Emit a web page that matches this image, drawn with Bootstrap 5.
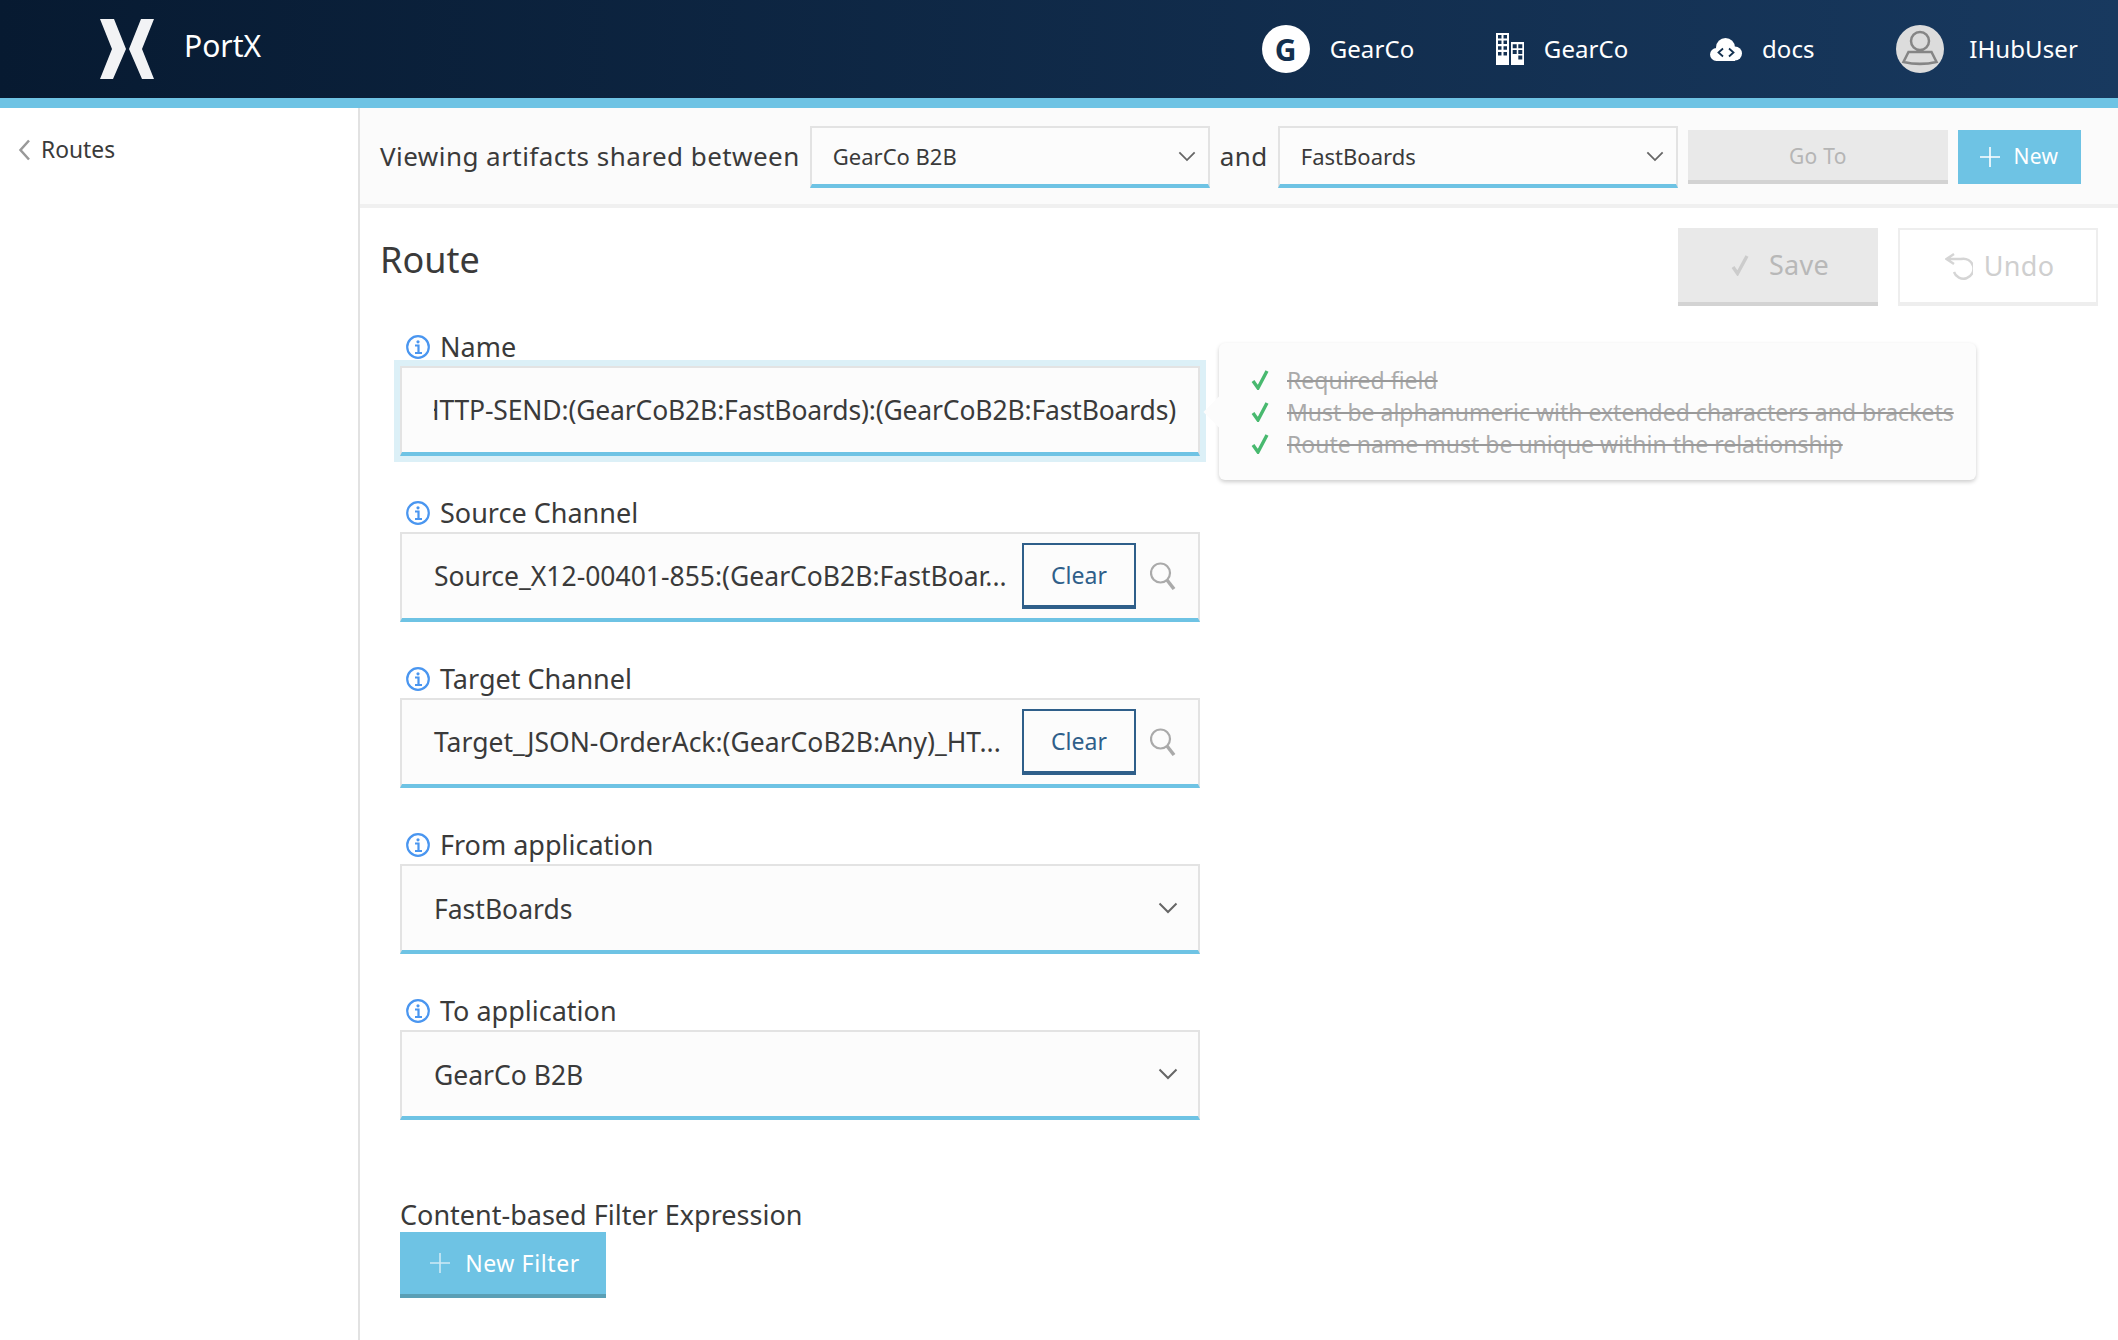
<!DOCTYPE html>
<html lang="en">
<head>
    <meta charset="UTF-8">
    <title>PortX - Route</title>
    <link href="https://cdn.jsdelivr.net/npm/bootstrap@5.3.1/dist/css/bootstrap.min.css" rel="stylesheet">
    <style>
        body { font-family: "Noto Sans", "Open Sans", sans-serif; color: #3a3a3a; font-size: 24px; background: #fff; overflow: hidden; height: 1340px; }
        .top-bar { height: 108px; padding: 0 40px 0 100px; background: linear-gradient(90deg, #071a31, #18395f); border-bottom: 10px solid #6ec3e4; }
        .brand-name { font-size: 30px; color: #fff; margin: 0 0 8px 30px; }
        .top-item { color: #fff; font-size: 24px; letter-spacing: .1px; gap: 20px; height: 98px; }
        .top-items { gap: 81.500px; }
        .g-circle { width: 48px; height: 48px; background: #fff; color: #12304f; font-weight: 700; font-size: 30px; }
        .user-item { gap: 25px; }
        .side-col { width: 360px; border-right: 2px solid #e2e2e2; height: 1232px; padding: 25px 18px; }
        .side-link { color: #3a3a3a; text-decoration: none; font-size: 22.800px; gap: 10px; }
        .tool-bar { height: 100px; padding: 2px 0 0 20px; gap: 10px; background: #fbfbfb; border-bottom: 4px solid #f0f0f0; }
        .tool-text { font-size: 26px; letter-spacing: .46px; white-space: nowrap; margin-bottom: 2px; }
        .pick { height: 62px; border-radius: 0; border-width: 2px 2px 4px; border-style: solid; border-color: #e3e3e3 #e3e3e3 #6ec3e4; background-color: #fcfcfc; color: #3a3a3a; font-family: inherit; box-shadow: none; flex-shrink: 0;
            background-image: url("data:image/svg+xml,%3csvg xmlns='http://www.w3.org/2000/svg' viewBox='0 0 20 12'%3e%3cpath fill='none' stroke='%23666' stroke-width='2' d='M1.500 1.500l8.500 8.500 8.500-8.500'/%3e%3c/svg%3e"); background-size: 18px 11px; }
        .pick-sm { width: 400px; font-size: 22px; padding: 0 40px 0 21px; background-position: right 12px center; }
        .btn-flat { border-radius: 0; border: 0; font-size: 21px; letter-spacing: .3px; height: 54px; flex-shrink: 0; }
        .btn-off { background: #e9e9e9; color: #b5b5b5; border-bottom: 4px solid #d3d3d3; width: 260px; padding: 4px 0 0; }
        .btn-new { background: #6ec3e4; color: #fff; width: 123px; gap: 13px; padding: 0; }
        .btn-new:hover, .btn-filter:hover { background: #6ec3e4; color: #fff; }
        .title-row { padding: 20px 20px 0; }
        .page-title { font-size: 36px; font-weight: 400; margin: 0 0 14px; color: #3a3a3a; }
        .big-group { gap: 20px; }
        .big-btn { width: 200px; height: 78px; border-radius: 0; font-size: 27px; gap: 19px; letter-spacing: .3px; padding: 0 0 0 3px; }
        .big-save { background: #e9e9e9; color: #b8b8b8; border: 0; border-bottom: 4px solid #d3d3d3; }
        .big-undo { background: #fff; color: #cfcfcf; border: 2px solid #eee; border-bottom-width: 4px; gap: 11px; }
        .form-area { width: 800px; margin: 26px 0 0 40px; }
        .fld { height: 166px; }
        .fld-label { height: 30px; font-size: 27px; line-height: 30px; margin: 0 0 4px 6px; gap: 10px; }
        .fld-box { height: 90px; border-radius: 0; border-width: 2px 2px 4px; border-style: solid; border-color: #e3e3e3 #e3e3e3 #6ec3e4; background: #fcfcfc; padding: 0 22px 0 32px; font-size: 26.500px; white-space: nowrap; }
        .fld-ring { box-shadow: 0 0 0 6px #dcf0f7; }
        .fld-clip { overflow: hidden; flex: 1; justify-content: flex-end; letter-spacing: -.16px; padding-top: 2px; }
        .fld-cut { flex: 1; min-width: 0; padding-top: 1px; }
        .pick-lg { height: 90px; font-size: 26.500px; padding: 3px 48px 0 32px; background-position: right 20px center; background-size: 20px 12px; }
        .clear-btn { width: 114px; height: 66px; border-radius: 0; border: 2px solid #2f5f8a; border-bottom-width: 4px; color: #2f5f8a; background: transparent; font-size: 23px; padding: 0; }
        .search-ico { margin-left: 14px; flex-shrink: 0; }
        .hint-box { left: 819px; top: 11px; width: 757px; height: 137px; background: #fcfcfc; border-radius: 6px; box-shadow: 0 2px 4px rgba(0,0,0,.2); padding: 21px 0 0 32px; color: #aaa; font-size: 23px; z-index: 2; }
        .hint-box::before { content: ""; position: absolute; left: -11px; top: 58px; width: 22px; height: 22px; background: #fcfcfc; transform: rotate(45deg); }
        .hint-line { height: 32px; gap: 17px; white-space: nowrap; text-decoration: line-through; text-decoration-color: #999; position: relative; }
        .filter-label { font-size: 27px; line-height: 34px; margin-top: 36px; }
        .btn-filter { width: 206px; height: 66px; border-radius: 0; border: 0; border-bottom: 4px solid #5a9fb5; background: #6ec3e4; color: #fff; font-size: 23px; letter-spacing: .6px; gap: 15px; padding: 0 0 0 4px; }
    </style>
</head>
<body>
    <nav class="top-bar d-flex align-items-center justify-content-between">
        <a class="d-flex align-items-center text-decoration-none" href="#">
            <svg width="54" height="60" viewBox="0 0 54 60"><path fill="#f2f3f5" d="M0 0h14l12 30-13 30H0l12-30zM54 0H41L29 30l13 30h12L42 30z"/></svg>
            <span class="brand-name">PortX</span>
        </a>
        <div class="top-items d-flex align-items-center">
            <div class="top-item d-flex align-items-center">
                <span class="g-circle rounded-circle d-flex align-items-center justify-content-center">G</span>GearCo
            </div>
            <div class="top-item d-flex align-items-center">
                <svg width="28" height="32" viewBox="0 0 28 32"><path fill="#fff" fill-rule="evenodd" d="M0 0h13v32H0zM15 9h13v23H15zM2 2v3.500h3.500V2zM7.500 2v3.500H11V2zM2 7.500V11h3.500V7.500zM7.500 7.500V11H11V7.500zM2 13.200v3.500h3.500v-3.500zM7.500 13.200v3.500H11v-3.500zM2 19v3.500h3.500V19zM7.500 19v3.500H11V19zM16.700 11.300v4h4v-4zM22.300 11.300v4h4v-4zM16.700 17v4h4v-4zM22.300 17v4h4v-4zM22.300 22.600v4h4v-4z"/></svg>GearCo
            </div>
            <div class="top-item d-flex align-items-center">
                <svg width="32" height="23" viewBox="0 0 32 23"><g fill="#fff"><circle cx="6.500" cy="16.500" r="6.500"/><circle cx="15.500" cy="9.500" r="9.500"/><circle cx="25" cy="15.500" r="7"/><rect x="6" y="14" width="19" height="9"/></g><path fill="none" stroke="#12304f" stroke-width="1.800" d="M13 10.500l-4.500 4 4.500 4M19 10.500l4.500 4-4.500 4"/></svg>docs
            </div>
            <div class="top-item user-item d-flex align-items-center">
                <svg width="48" height="48" viewBox="0 0 48 48"><circle cx="24" cy="24" r="24" fill="#dcdcdc"/><g fill="none" stroke="#858585" stroke-width="2.500"><circle cx="24" cy="16" r="9"/><path d="M12.500 27h23l5 10c-11 2.500-22 2.500-33 0z"/></g></svg>IHubUser
            </div>
        </div>
    </nav>
    <div class="d-flex">
        <aside class="side-col flex-shrink-0">
            <a class="side-link d-flex align-items-center" href="#">
                <svg width="13" height="22" viewBox="0 0 13 22"><path fill="none" stroke="#999" stroke-width="2.500" d="M11 1.500L2.500 11l8.500 9.500"/></svg>Routes
            </a>
        </aside>
        <main class="flex-grow-1">
            <div class="tool-bar d-flex align-items-center">
                <span class="tool-text">Viewing artifacts shared between</span>
                <select class="form-select pick pick-sm"><option>GearCo B2B</option></select>
                <span class="tool-text">and</span>
                <select class="form-select pick pick-sm"><option>FastBoards</option></select>
                <button class="btn btn-flat btn-off">Go To</button>
                <button class="btn btn-flat btn-new d-flex align-items-center justify-content-center">
                    <svg width="20" height="20" viewBox="0 0 20 20"><path stroke="#fff" stroke-width="1.600" d="M10 0v20M0 10h20"/></svg>New
                </button>
            </div>
            <div class="title-row d-flex justify-content-between align-items-center">
                <h1 class="page-title">Route</h1>
                <div class="d-flex big-group">
                    <button class="btn big-btn big-save d-flex align-items-center justify-content-center">
                        <svg width="20" height="22" viewBox="0 0 20 22"><path fill="none" stroke="#ccc" stroke-width="3.400" d="M3 13l4.500 6.500L17 2"/></svg>Save
                    </button>
                    <button class="btn big-btn big-undo d-flex align-items-center justify-content-center">
                        <svg width="28" height="28" viewBox="0 0 28 28"><path fill="none" stroke="#d5d5d5" stroke-width="2.400" d="M9 2L1.500 7 9 12M1.500 7H16a10 10 0 1 1-7 13"/></svg>Undo
                    </button>
                </div>
            </div>
            <form class="form-area">
                <div class="fld position-relative">
                    <label class="fld-label d-flex align-items-center">
                        <svg width="24" height="24" viewBox="0 0 24 24"><circle cx="12" cy="12" r="10.800" fill="none" stroke="#4a96f0" stroke-width="2.200"/><path fill="none" stroke="#4a96f0" stroke-width="2.200" d="M9 10.500h3.500V18M9 18h7"/><circle cx="12" cy="6.800" r="1.600" fill="#4a96f0"/></svg>Name
                    </label>
                    <div class="fld-box fld-ring d-flex align-items-center"><div class="fld-clip d-flex">HTTP-SEND:(GearCoB2B:FastBoards):(GearCoB2B:FastBoards)</div></div>
                    <div class="hint-box position-absolute">
                        <div class="hint-line d-flex align-items-center"><svg width="19" height="20" viewBox="0 0 19 20"><path fill="none" stroke="#48b96f" stroke-width="3.400" d="M2 11l5 7 9-17"/></svg><span>Required field</span></div>
                        <div class="hint-line d-flex align-items-center"><svg width="19" height="20" viewBox="0 0 19 20"><path fill="none" stroke="#48b96f" stroke-width="3.400" d="M2 11l5 7 9-17"/></svg><span>Must be alphanumeric with extended characters and brackets</span></div>
                        <div class="hint-line d-flex align-items-center"><svg width="19" height="20" viewBox="0 0 19 20"><path fill="none" stroke="#48b96f" stroke-width="3.400" d="M2 11l5 7 9-17"/></svg><span>Route name must be unique within the relationship</span></div>
                    </div>
                </div>
                <div class="fld">
                    <label class="fld-label d-flex align-items-center">
                        <svg width="24" height="24" viewBox="0 0 24 24"><circle cx="12" cy="12" r="10.800" fill="none" stroke="#4a96f0" stroke-width="2.200"/><path fill="none" stroke="#4a96f0" stroke-width="2.200" d="M9 10.500h3.500V18M9 18h7"/><circle cx="12" cy="6.800" r="1.600" fill="#4a96f0"/></svg>Source Channel
                    </label>
                    <div class="fld-box d-flex align-items-center">
                        <div class="fld-cut">Source_X12-00401-855:(GearCoB2B:FastBoar...</div>
                        <button type="button" class="btn clear-btn flex-shrink-0">Clear</button>
                        <svg class="search-ico" width="26" height="28" viewBox="0 0 26 28"><circle cx="10.500" cy="11" r="9.500" fill="none" stroke="#aaa" stroke-width="2.200"/><path stroke="#aaa" stroke-width="3.500" d="M17 18l7 9"/></svg>
                    </div>
                </div>
                <div class="fld">
                    <label class="fld-label d-flex align-items-center">
                        <svg width="24" height="24" viewBox="0 0 24 24"><circle cx="12" cy="12" r="10.800" fill="none" stroke="#4a96f0" stroke-width="2.200"/><path fill="none" stroke="#4a96f0" stroke-width="2.200" d="M9 10.500h3.500V18M9 18h7"/><circle cx="12" cy="6.800" r="1.600" fill="#4a96f0"/></svg>Target Channel
                    </label>
                    <div class="fld-box d-flex align-items-center">
                        <div class="fld-cut">Target_JSON-OrderAck:(GearCoB2B:Any)_HT...</div>
                        <button type="button" class="btn clear-btn flex-shrink-0">Clear</button>
                        <svg class="search-ico" width="26" height="28" viewBox="0 0 26 28"><circle cx="10.500" cy="11" r="9.500" fill="none" stroke="#aaa" stroke-width="2.200"/><path stroke="#aaa" stroke-width="3.500" d="M17 18l7 9"/></svg>
                    </div>
                </div>
                <div class="fld">
                    <label class="fld-label d-flex align-items-center">
                        <svg width="24" height="24" viewBox="0 0 24 24"><circle cx="12" cy="12" r="10.800" fill="none" stroke="#4a96f0" stroke-width="2.200"/><path fill="none" stroke="#4a96f0" stroke-width="2.200" d="M9 10.500h3.500V18M9 18h7"/><circle cx="12" cy="6.800" r="1.600" fill="#4a96f0"/></svg>From application
                    </label>
                    <select class="form-select pick pick-lg"><option>FastBoards</option></select>
                </div>
                <div class="fld">
                    <label class="fld-label d-flex align-items-center">
                        <svg width="24" height="24" viewBox="0 0 24 24"><circle cx="12" cy="12" r="10.800" fill="none" stroke="#4a96f0" stroke-width="2.200"/><path fill="none" stroke="#4a96f0" stroke-width="2.200" d="M9 10.500h3.500V18M9 18h7"/><circle cx="12" cy="6.800" r="1.600" fill="#4a96f0"/></svg>To application
                    </label>
                    <select class="form-select pick pick-lg"><option>GearCo B2B</option></select>
                </div>
                <div class="filter-label">Content-based Filter Expression</div>
                <button type="button" class="btn btn-filter d-flex align-items-center justify-content-center">
                    <svg width="20" height="20" viewBox="0 0 20 20"><path stroke="#cfeaf5" stroke-width="1.600" d="M10 0v20M0 10h20"/></svg>New Filter
                </button>
            </form>
        </main>
    </div>
</body>
</html>
